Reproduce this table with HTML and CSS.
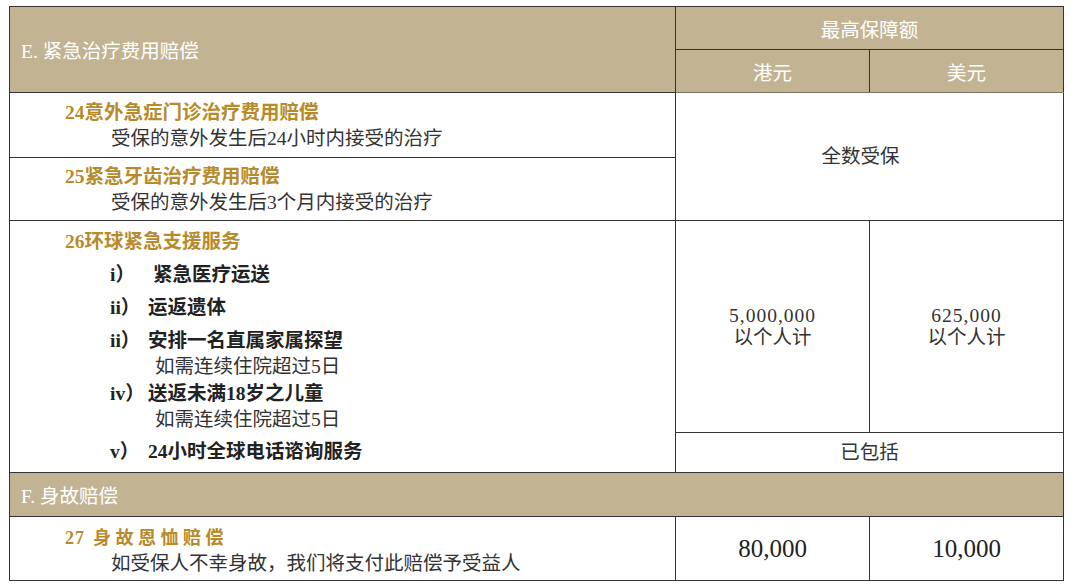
FILE: index.html
```html
<!DOCTYPE html>
<html lang="zh-CN">
<head>
    <meta charset="UTF-8">
    <meta name="viewport" content="width=device-width, initial-scale=1.0">
    <title>紧急治疗费用赔偿</title>
    <link rel="stylesheet" href="styles.css">
</head>
<body>
    <table class="benefit-table">
        <colgroup>
            <col class="col-item">
            <col class="col-hkd">
            <col class="col-usd">
        </colgroup>
        <thead>
            <tr class="head-top">
                <th rowspan="2" class="section-title">E. 紧急治疗费用赔偿</th>
                <th colspan="2" class="center">最高保障额</th>
            </tr>
            <tr class="head-sub">
                <th class="center">港元</th>
                <th class="center">美元</th>
            </tr>
        </thead>
        <tbody>
            <tr class="row-24">
                <td class="item">
                    <div class="item-title">24意外急症门诊治疗费用赔偿</div>
                    <div class="item-desc">受保的意外发生后24小时内接受的治疗</div>
                </td>
                <td colspan="2" rowspan="2" class="center value all-cover">全数受保</td>
            </tr>
            <tr class="row-25">
                <td class="item">
                    <div class="item-title">25紧急牙齿治疗费用赔偿</div>
                    <div class="item-desc">受保的意外发生后3个月内接受的治疗</div>
                </td>
            </tr>
            <tr class="row-26">
                <td rowspan="2" class="item">
                    <div class="item-title">26环球紧急支援服务</div>
                    <div class="service"><span class="num num-wide">i）</span>紧急医疗运送</div>
                    <div class="service"><span class="num">ii）</span>运返遗体</div>
                    <div class="service"><span class="num">ii）</span>安排一名直属家属探望</div>
                    <div class="service-note">如需连续住院超过5日</div>
                    <div class="service tight"><span class="num">iv）</span>送返未满18岁之儿童</div>
                    <div class="service-note">如需连续住院超过5日</div>
                    <div class="service"><span class="num">v）</span>24小时全球电话谘询服务</div>
                </td>
                <td class="center value">
                    <div class="amount">5,000,000</div>
                    <div>以个人计</div>
                </td>
                <td class="center value">
                    <div class="amount">625,000</div>
                    <div>以个人计</div>
                </td>
            </tr>
            <tr class="row-26b">
                <td colspan="2" class="center value included">已包括</td>
            </tr>
            <tr class="section-row">
                <td colspan="3" class="section-title">F. 身故赔偿</td>
            </tr>
            <tr class="row-27">
                <td class="item">
                    <div class="item-title spaced"><span class="item-no">27</span>身故恩恤赔偿</div>
                    <div class="item-desc">如受保人不幸身故，我们将支付此赔偿予受益人</div>
                </td>
                <td class="center big">80,000</td>
                <td class="center big">10,000</td>
            </tr>
        </tbody>
    </table>
</body>
</html>
```

FILE: styles.css
```css
/* Page */
body {
    margin: 0;
    padding: 6px 0 0 9px;
    background: #ffffff;
    font-family: "Liberation Serif", "Noto Sans CJK SC", serif;
    font-size: 19.5px;
    color: #333;
}

/* Table */
.benefit-table {
    border-collapse: collapse;
    table-layout: fixed;
    width: 1054px;
    border-right: 1px solid #999;
}

.col-item { width: 666px; }
.col-hkd { width: 194px; }
.col-usd { width: 194px; }

.benefit-table th,
.benefit-table td {
    border: 1px solid #333;
    padding: 0;
    font-weight: normal;
    vertical-align: middle;
}

.center { text-align: center; }

/* Header */
thead th {
    background: #c2b392;
    color: #fff;
}

thead tr.head-sub th {
    border-bottom: 1px solid #7c7464;
}

.head-top { height: 43px; }
.head-sub { height: 43px; }

.section-title {
    text-align: left;
    padding-left: 11px !important;
    color: #fff;
    background: #c2b392;
}

/* Body rows */
.row-24 { height: 65px; }
.row-25 { height: 63px; }
.row-26 { height: 212px; }
.row-26b { height: 40px; }
.section-row { height: 44px; }
.row-27 { height: 64px; }

.item {
    padding-left: 55px !important;
}

.item-title {
    color: #b78a2b;
    font-weight: bold;
    line-height: 26px;
}

.item-title.spaced {
    font-size: 18px;
    letter-spacing: 4.5px;
    padding-top: 3px;
}

.item-title .item-no {
    letter-spacing: 1px;
    margin-right: 8px;
}

.item-desc {
    padding-left: 46px;
    line-height: 25px;
}

/* Services list */
.service {
    color: #222;
    font-weight: bold;
    line-height: 26px;
    padding-left: 45px;
    margin-top: 7px;
}

.service.tight { margin-top: 2px; }

.service .num {
    display: inline-block;
    width: 38px;
}

.service .num-wide { width: 43px; }

.service-note {
    padding-left: 90px;
    line-height: 25px;
}

/* Values */
.value { line-height: 22px; }

.all-cover { padding-right: 18px !important; }

.amount { letter-spacing: 1px; }

.included {
    border-top: 1px solid #aaa !important;
}

.big {
    font-size: 25px;
    color: #222;
}
```
